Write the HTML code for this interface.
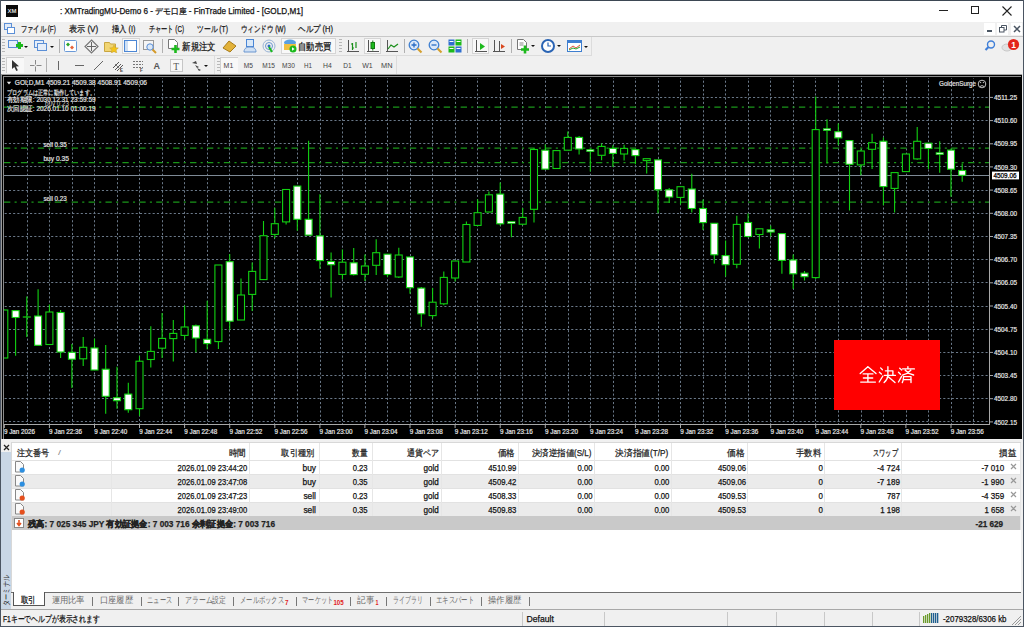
<!DOCTYPE html>
<html><head><meta charset="utf-8">
<style>
*{box-sizing:border-box}
html,body{margin:0;padding:0}
body{width:1024px;height:627px;overflow:hidden;position:relative;background:#f0f0f0;font-family:"Liberation Sans",sans-serif;color:#000}
.a{position:absolute}
.t{position:absolute;white-space:nowrap;line-height:1}
#title{left:0;top:0;width:1024px;height:22px;background:#fff}
#menu{left:0;top:22px;width:1024px;height:14px;background:#f0f0f0}
.mi{position:absolute;top:23px;font-size:11.5px;color:#1a1a1a;white-space:nowrap;line-height:12px}
#tb1{left:1px;top:36px;width:1022px;height:1px;background:#c8c8c8}
.grip{position:absolute;width:3px;background-image:repeating-linear-gradient(#b8b8b8 0 1px,transparent 1px 3px)}
.sep{position:absolute;width:1px;background:#b0b0b0}
.tbtxt{position:absolute;font-size:11.5px;color:#111;white-space:nowrap;line-height:12px}
.tf{position:absolute;top:61px;font-size:7.8px;color:#444;white-space:nowrap;line-height:8px}
.tab{position:absolute;top:597px;font-size:10.5px;color:#666;white-space:nowrap;line-height:11px}
.cell{position:absolute;font-size:9.4px;white-space:nowrap;line-height:10px;text-align:right;color:#111}
</style></head><body>
<div id="title" class="a"></div>
<div class="a" style="left:6px;top:5px;width:12px;height:12px;background:#0a0a0a"></div>
<div class="a" style="left:939px;top:10px;width:9px;height:1px;background:#222"></div>
<div class="a" style="left:971px;top:6px;width:8px;height:8px;border:1px solid #222"></div>
<svg class="a" style="left:1002px;top:6px" width="10" height="10"><path d="M0.5 0.5L9.5 9.5M9.5 0.5L0.5 9.5" stroke="#222" stroke-width="1.1"/></svg>
<div id="menu" class="a"></div>
<svg class="a" style="left:4px;top:23px" width="11" height="11"><rect x="0.5" y="0.5" width="7" height="6" fill="#dfeaf8" stroke="#5b8fd6"/><rect x="3.5" y="4.5" width="7" height="6" fill="#fff" stroke="#5b8fd6"/></svg>
<div class="a" style="left:984px;top:23px;width:11px;height:12px;background:#fff"></div>
<div class="a" style="left:997px;top:23px;width:11px;height:12px;background:#fff"></div>
<div class="a" style="left:1011px;top:23px;width:11px;height:12px;background:#fff"></div>
<div class="a" style="left:987px;top:30px;width:5px;height:2px;background:#4a5562"></div>
<svg class="a" style="left:999px;top:25px" width="8" height="8"><rect x="0.5" y="2.5" width="4.5" height="4.5" fill="none" stroke="#4a5562"/><path d="M2.5 2.5V0.5H7.5V5H5" fill="none" stroke="#4a5562"/></svg>
<svg class="a" style="left:1013px;top:25px" width="8" height="8"><path d="M1 1L7 7M7 1L1 7" stroke="#4a5562" stroke-width="1.5"/></svg>
<div id="tb1" class="a"></div>
<!-- toolbar 1 -->
<div class="a" style="left:1px;top:37px;width:591px;height:18px;background:#f0f0f0;border-right:1px solid #dcdcdc"></div>
<div class="grip" style="left:2px;top:39px;height:14px"></div>
<svg class="a" style="left:7px;top:39px" width="24" height="14"><rect x="1.5" y="1.5" width="9" height="7" fill="#e6eef9" stroke="#5b8fd6"/><path d="M9 6.5h7M12.5 3v7" stroke="#1cb91c" stroke-width="3"/><path d="M17 7h4l-2 2z" fill="#111"/></svg>
<svg class="a" style="left:33px;top:39px" width="24" height="14"><rect x="1.5" y="1.5" width="9" height="7" fill="#e6eef9" stroke="#5b8fd6"/><rect x="4.5" y="4.5" width="9" height="7" fill="#e6eef9" stroke="#5b8fd6"/><path d="M17 7h4l-2 2z" fill="#111"/></svg>
<div class="sep" style="left:59px;top:39px;height:14px"></div>
<svg class="a" style="left:64px;top:40px" width="14" height="13"><rect x="0.5" y="0.5" width="12" height="11" rx="1" fill="#fff" stroke="#6a9ad8"/><path d="M4 2.5l2 2-2 2-2-2z" fill="#2aa52a"/><path d="M8 5.5l2 2-2 2-2-2z" fill="#e8643a"/></svg>
<svg class="a" style="left:84px;top:39px" width="15" height="15"><path d="M7.5 1L14 7.5 7.5 14 1 7.5z" fill="none" stroke="#777" stroke-width="1.2"/><path d="M7.5 3v9M3 7.5h9" stroke="#666"/></svg>
<svg class="a" style="left:104px;top:40px" width="15" height="13"><path d="M0.5 2.5h5l1 1.5h5v7.5h-11z" fill="#f1d573" stroke="#c9a640"/><path d="M10 5l1.3 2.7 3 .3-2.2 2 .6 3-2.7-1.5-2.7 1.5.6-3-2.2-2 3-.3z" fill="#f5c518" stroke="#c9a640" stroke-width=".6"/></svg>
<div class="a" style="left:122px;top:38px;width:18px;height:16px;background:#f8f8f8;border:1px solid #d5d5d5"></div>
<svg class="a" style="left:124px;top:40px" width="14" height="13"><rect x="0.5" y="0.5" width="12" height="11" fill="#fff" stroke="#4b86d4"/><rect x="1" y="1" width="3" height="10" fill="#cfe0f5"/></svg>
<svg class="a" style="left:143px;top:40px" width="15" height="14"><rect x="0.5" y="0.5" width="10" height="9" fill="#f5f5f5" stroke="#999"/><circle cx="7" cy="7" r="3.2" fill="#dbe8f6" stroke="#5b8fd6"/><path d="M9.5 9.5l3.5 3.5" stroke="#d49a2a" stroke-width="2"/></svg>
<div class="sep" style="left:162px;top:39px;height:14px"></div>
<svg class="a" style="left:167px;top:39px" width="14" height="15"><path d="M1.5 0.5h6l3 3v6h-9z" fill="#fff" stroke="#777"/><path d="M4.5 10h8M8.5 6v8" stroke="#1cb91c" stroke-width="2.6"/></svg>
<svg class="a" style="left:222px;top:40px" width="15" height="13"><path d="M1 8l6-7 7 5-6 6z" fill="#e2b23a" stroke="#a87c1a"/></svg>
<svg class="a" style="left:243px;top:39px" width="15" height="14"><rect x="3.5" y="0.5" width="7" height="7" fill="#d9e8f8" stroke="#4a86d6"/><path d="M1 13c0-4 3-5 6-5s6 1 6 5z" fill="#cfe0f4" stroke="#6a96d0"/></svg>
<svg class="a" style="left:262px;top:39px" width="14" height="14"><circle cx="7" cy="7" r="6" fill="none" stroke="#9ab4d6"/><circle cx="7" cy="7" r="3.5" fill="none" stroke="#6a96d0"/><circle cx="7" cy="7" r="1.5" fill="#2f6fc0"/><path d="M7 8l3 5" stroke="#1cb91c" stroke-width="2"/></svg>
<div class="a" style="left:281px;top:38px;width:55px;height:16px;background:#f8f8f8;border:1px solid #d5d5d5"></div>
<svg class="a" style="left:283px;top:39px" width="15" height="14"><ellipse cx="7" cy="3.5" rx="6" ry="3" fill="#5aa0e0"/><path d="M1 5h12v6H1z" fill="#f0c040"/><circle cx="10" cy="10" r="3.5" fill="#1cb91c"/><path d="M9 8.3v3.4l2.6-1.7z" fill="#fff"/></svg>
<div class="grip" style="left:339px;top:39px;height:14px"></div>
<svg class="a" style="left:346px;top:39px" width="14" height="14"><path d="M2.5 1v12M1 12.5h12" stroke="#555"/><path d="M6.5 4v7M5 5h1.5M6.5 9H8M10 3v6" stroke="#1a8f1a" stroke-width="1.2"/></svg>
<div class="a" style="left:364px;top:38px;width:17px;height:16px;background:#f8f8f8;border:1px solid #d5d5d5"></div>
<svg class="a" style="left:366px;top:39px" width="14" height="14"><path d="M2.5 1v12M1 12.5h12" stroke="#555"/><rect x="5" y="3.5" width="3.5" height="6" fill="#1cb91c" stroke="#137a13"/><path d="M6.8 1.5v2M6.8 9.5v2" stroke="#137a13"/></svg>
<svg class="a" style="left:385px;top:39px" width="14" height="14"><path d="M2.5 1v12M1 12.5h12" stroke="#555"/><path d="M3 10l3-4 3 2 4-3" fill="none" stroke="#1a8f1a" stroke-width="1.2"/></svg>
<div class="sep" style="left:404px;top:39px;height:14px"></div>
<svg class="a" style="left:408px;top:39px" width="15" height="15"><circle cx="6" cy="6" r="4.8" fill="#dbe8f8" stroke="#3f7fd0" stroke-width="1.3"/><path d="M3.5 6h5M6 3.5v5" stroke="#2a6cc4" stroke-width="1.3"/><path d="M9.5 9.5l4 4" stroke="#d4a030" stroke-width="2.2"/></svg>
<svg class="a" style="left:428px;top:39px" width="15" height="15"><circle cx="6" cy="6" r="4.8" fill="#dbe8f8" stroke="#3f7fd0" stroke-width="1.3"/><path d="M3.5 6h5" stroke="#2a6cc4" stroke-width="1.3"/><path d="M9.5 9.5l4 4" stroke="#d4a030" stroke-width="2.2"/></svg>
<svg class="a" style="left:448px;top:39px" width="14" height="14"><rect x="0.5" y="0.5" width="6" height="6" fill="#2f6fd0"/><rect x="7.5" y="0.5" width="6" height="6" fill="#1cb91c"/><rect x="0.5" y="7.5" width="6" height="6" fill="#1cb91c"/><rect x="7.5" y="7.5" width="6" height="6" fill="#2f6fd0"/><path d="M1.5 2.5h4M8.5 2.5h4M1.5 9.5h4M8.5 9.5h4" stroke="#fff"/></svg>
<div class="sep" style="left:467px;top:39px;height:14px"></div>
<div class="a" style="left:472px;top:38px;width:17px;height:16px;background:#f8f8f8;border:1px solid #d5d5d5"></div>
<svg class="a" style="left:474px;top:39px" width="14" height="14"><path d="M2.5 1v12M1 12.5h12" stroke="#555"/><path d="M6 4l5 3.5-5 3.5z" fill="#1cb91c"/></svg>
<svg class="a" style="left:492px;top:39px" width="14" height="14"><path d="M2.5 1v12M1 12.5h12M7.5 2v10" stroke="#555"/><path d="M9 5l4 2.5-4 2.5z" fill="#d9481e"/></svg>
<div class="sep" style="left:511px;top:39px;height:14px"></div>
<svg class="a" style="left:516px;top:38px" width="22" height="16"><path d="M1.5 1.5h6l3 3v7h-9z" fill="#fff" stroke="#777"/><path d="M3.5 5h4M3.5 7h4" stroke="#888"/><path d="M5 11.5h8M9 7.5v8" stroke="#1cb91c" stroke-width="2.6"/><path d="M15 7h4l-2 2z" fill="#111"/></svg>
<svg class="a" style="left:541px;top:38px" width="22" height="16"><circle cx="7" cy="8" r="6" fill="#fff" stroke="#2a64b4" stroke-width="2"/><path d="M7 4.5V8h3" stroke="#2a64b4" stroke-width="1.2" fill="none"/><path d="M16 7h4l-2 2z" fill="#111"/></svg>
<svg class="a" style="left:567px;top:39px" width="22" height="15"><rect x="0.5" y="1.5" width="14" height="11" fill="#fff" stroke="#3f7fd0"/><rect x="0.5" y="1.5" width="14" height="2.5" fill="#3f7fd0"/><path d="M2 10l4-3 3 2 4-3" fill="none" stroke="#e0503a"/><path d="M2 11l4-2 3 1 4-2" fill="none" stroke="#2aa52a"/><path d="M17 7h4l-2 2z" fill="#111"/></svg>
<!-- search & notify -->
<svg class="a" style="left:984px;top:39px" width="12" height="13"><circle cx="7" cy="5.5" r="3.5" fill="none" stroke="#3f7fd8" stroke-width="1.4"/><path d="M4.5 8l-3 3" stroke="#3f7fd8" stroke-width="2.2"/></svg>
<svg class="a" style="left:1001px;top:37px" width="20" height="17"><ellipse cx="6" cy="10.5" rx="5" ry="3.5" fill="#e2e2e2" stroke="#c8c8c8"/><circle cx="12.5" cy="7.5" r="5.6" fill="#e3261c"/><text x="12.5" y="10.8" font-size="8.5" font-weight="bold" fill="#fff" text-anchor="middle" font-family="Liberation Sans">1</text></svg>
<!-- toolbar 2 -->
<div class="a" style="left:1px;top:55px;width:591px;height:1px;background:#dcdcdc"></div>
<div class="a" style="left:1px;top:56px;width:214px;height:18px;border-right:1px solid #dcdcdc"></div>
<div class="grip" style="left:2px;top:58px;height:14px"></div>
<div class="a" style="left:6px;top:57px;width:18px;height:16px;background:#f8f8f8;border-top:1px solid #d0d0d0;border-left:1px solid #d0d0d0"></div>
<svg class="a" style="left:11px;top:59px" width="9" height="13"><path d="M1 1v9l2.3-2 2 4 1.6-.8-2-3.8 3.1-.2z" fill="#333"/></svg>
<svg class="a" style="left:29px;top:59px" width="13" height="13"><path d="M6.5 1v4.5M6.5 7.5v5M1 6.5h4.5M7.5 6.5h5" stroke="#888"/></svg>
<div class="sep" style="left:46px;top:58px;height:14px"></div>
<div class="a" style="left:58px;top:61px;width:1px;height:9px;background:#666"></div>
<div class="a" style="left:75px;top:65px;width:9px;height:1px;background:#666"></div>
<svg class="a" style="left:93px;top:60px" width="11" height="11"><path d="M1 10L10 1" stroke="#666"/></svg>
<svg class="a" style="left:112px;top:59px" width="13" height="13"><path d="M1 9l6-6M3 11l6-6M5 12l6-6" stroke="#555"/><path d="M3 5l6 6" stroke="#888"/><text x="8" y="13" font-size="4.5" font-weight="bold" fill="#444" font-family="Liberation Sans">E</text></svg>
<svg class="a" style="left:132px;top:59px" width="13" height="13"><path d="M1 2.5h10M1 5.5h10M1 8.5h10" stroke="#777" stroke-dasharray="2 1"/><text x="8" y="13" font-size="4.5" font-weight="bold" fill="#444" font-family="Liberation Sans">F</text></svg>
<svg class="a" style="left:170px;top:59px" width="13" height="13"><rect x="0.5" y="0.5" width="12" height="12" fill="#f8f8f8" stroke="#999" stroke-dasharray="1 1"/><text x="3.2" y="10.5" font-size="9.5" fill="#555" font-family="Liberation Serif">T</text></svg>
<svg class="a" style="left:190px;top:59px" width="22" height="13"><path d="M2 4l4-2 1 3zM5 6l4 2-2 1z" fill="#444"/><path d="M7 9l4 2-2 1" fill="#444"/><path d="M14 6h4l-2 2z" fill="#111"/></svg>
<div class="grip" style="left:217px;top:58px;height:14px"></div>
<div class="a" style="left:220px;top:57px;width:18px;height:16px;background:#f8f8f8;border-top:1px solid #d0d0d0;border-left:1px solid #d0d0d0"></div>
<div class="a" style="left:396px;top:56px;width:1px;height:18px;background:#dcdcdc"></div>
<svg width="1024" height="627" style="position:absolute;left:0;top:0"><defs><clipPath id="plot"><rect x="4" y="78" width="985" height="346"/></clipPath></defs><rect x="1" y="74" width="1021" height="365" fill="#000"/><line x1="1" y1="74.5" x2="1022" y2="74.5" stroke="#a0a0a0"/><line x1="1.5" y1="74" x2="1.5" y2="439" stroke="#9a9a9a"/><line x1="3.5" y1="77" x2="3.5" y2="439" stroke="#8a8a8a"/><line x1="3" y1="76.5" x2="1021" y2="76.5" stroke="#8a8a8a"/><line x1="1022.5" y1="74" x2="1022.5" y2="439" stroke="#e8e8e8"/><path d="M27.5 78V424 M49.5 78V424 M72.5 78V424 M94.5 78V424 M117.5 78V424 M139.5 78V424 M162.5 78V424 M184.5 78V424 M207.5 78V424 M229.5 78V424 M252.5 78V424 M274.5 78V424 M297.5 78V424 M320.5 78V424 M342.5 78V424 M365.5 78V424 M387.5 78V424 M410.5 78V424 M432.5 78V424 M455.5 78V424 M477.5 78V424 M500.5 78V424 M522.5 78V424 M545.5 78V424 M568.5 78V424 M590.5 78V424 M613.5 78V424 M635.5 78V424 M658.5 78V424 M680.5 78V424 M703.5 78V424 M725.5 78V424 M748.5 78V424 M770.5 78V424 M793.5 78V424 M815.5 78V424 M838.5 78V424 M861.5 78V424 M883.5 78V424 M906.5 78V424 M928.5 78V424 M951.5 78V424 M973.5 78V424" stroke="#6a7888" stroke-width="1" stroke-dasharray="2.114 2.114" stroke-dashoffset="1.55" fill="none"/><path d="M4 97.5H989 M4 120.5H989 M4 143.5H989 M4 166.5H989 M4 190.5H989 M4 213.5H989 M4 236.5H989 M4 259.5H989 M4 282.5H989 M4 306.5H989 M4 329.5H989 M4 352.5H989 M4 375.5H989 M4 398.5H989 M4 421.5H989" stroke="#6a7888" stroke-width="1" stroke-dasharray="2.114 2.114" stroke-dashoffset="3.57" fill="none"/><line x1="4" y1="107.2" x2="989" y2="107.2" stroke="#1a961a" stroke-width="1.2" stroke-dasharray="6.34 4.23 2.11 4.233" stroke-dashoffset="0"/><line x1="4" y1="148.2" x2="989" y2="148.2" stroke="#1a961a" stroke-width="1.2" stroke-dasharray="6.34 4.23 2.11 4.233" stroke-dashoffset="0"/><line x1="4" y1="162.6" x2="989" y2="162.6" stroke="#1a961a" stroke-width="1.2" stroke-dasharray="6.34 4.23 2.11 4.233" stroke-dashoffset="0"/><line x1="4" y1="202.1" x2="989" y2="202.1" stroke="#1a961a" stroke-width="1.2" stroke-dasharray="6.34 4.23 2.11 4.233" stroke-dashoffset="0"/><line x1="4" y1="175.5" x2="989" y2="175.5" stroke="#7e8a96" stroke-width="1"/><g clip-path="url(#plot)"><path d="M4.3 309.5V310.0M4.3 358.0V358.0" stroke="#12d212" stroke-width="1.1"/><rect x="0.8" y="310.0" width="7" height="48.0" fill="#000" stroke="#12d212" stroke-width="1.1"/><path d="M15.6 310.6V310.6M15.6 317.5V355.8" stroke="#12d212" stroke-width="1.1"/><rect x="12.1" y="310.6" width="7" height="6.9" fill="#fff" stroke="#12d212" stroke-width="1.1"/><path d="M26.8 296.6V317.0M26.8 317.0V336.9" stroke="#12d212" stroke-width="1.1"/><path d="M22.8 317.0H30.8" stroke="#0fb80f" stroke-width="1.4"/><path d="M38.1 289.3V316.0M38.1 345.3V345.3" stroke="#12d212" stroke-width="1.1"/><rect x="34.6" y="316.0" width="7" height="29.3" fill="#fff" stroke="#12d212" stroke-width="1.1"/><path d="M49.4 304.6V312.0M49.4 344.5V344.5" stroke="#12d212" stroke-width="1.1"/><rect x="45.9" y="312.0" width="7" height="32.5" fill="#000" stroke="#12d212" stroke-width="1.1"/><path d="M60.6 310.0V312.5M60.6 352.0V358.0" stroke="#12d212" stroke-width="1.1"/><rect x="57.1" y="312.5" width="7" height="39.5" fill="#fff" stroke="#12d212" stroke-width="1.1"/><path d="M71.9 344.0V352.3M71.9 359.2V388.0" stroke="#12d212" stroke-width="1.1"/><rect x="68.4" y="352.3" width="7" height="6.9" fill="#fff" stroke="#12d212" stroke-width="1.1"/><path d="M83.2 337.0V347.3M83.2 358.8V366.0" stroke="#12d212" stroke-width="1.1"/><rect x="79.7" y="347.3" width="7" height="11.5" fill="#000" stroke="#12d212" stroke-width="1.1"/><path d="M94.5 338.5V348.0M94.5 370.0V370.0" stroke="#12d212" stroke-width="1.1"/><rect x="91.0" y="348.0" width="7" height="22.0" fill="#fff" stroke="#12d212" stroke-width="1.1"/><path d="M105.7 345.0V369.2M105.7 396.3V413.7" stroke="#12d212" stroke-width="1.1"/><rect x="102.2" y="369.2" width="7" height="27.1" fill="#fff" stroke="#12d212" stroke-width="1.1"/><path d="M117.0 366.8V397.7M117.0 400.7V408.7" stroke="#12d212" stroke-width="1.1"/><rect x="113.5" y="397.7" width="7" height="3.0" fill="#fff" stroke="#12d212" stroke-width="1.1"/><path d="M128.3 382.8V394.1M128.3 409.7V412.7" stroke="#12d212" stroke-width="1.1"/><rect x="124.8" y="394.1" width="7" height="15.6" fill="#fff" stroke="#12d212" stroke-width="1.1"/><path d="M139.5 355.8V361.2M139.5 408.7V415.7" stroke="#12d212" stroke-width="1.1"/><rect x="136.0" y="361.2" width="7" height="47.5" fill="#000" stroke="#12d212" stroke-width="1.1"/><path d="M150.8 326.3V351.4M150.8 359.5V367.5" stroke="#12d212" stroke-width="1.1"/><rect x="147.3" y="351.4" width="7" height="8.1" fill="#000" stroke="#12d212" stroke-width="1.1"/><path d="M162.1 313.0V338.4M162.1 348.2V357.9" stroke="#12d212" stroke-width="1.1"/><rect x="158.6" y="338.4" width="7" height="9.8" fill="#000" stroke="#12d212" stroke-width="1.1"/><path d="M173.3 320.0V333.4M173.3 338.6V361.5" stroke="#12d212" stroke-width="1.1"/><rect x="169.8" y="333.4" width="7" height="5.2" fill="#000" stroke="#12d212" stroke-width="1.1"/><path d="M184.6 305.4V327.0M184.6 335.4V339.4" stroke="#12d212" stroke-width="1.1"/><rect x="181.1" y="327.0" width="7" height="8.4" fill="#000" stroke="#12d212" stroke-width="1.1"/><path d="M195.9 324.5V325.8M195.9 338.0V352.3" stroke="#12d212" stroke-width="1.1"/><rect x="192.4" y="325.8" width="7" height="12.2" fill="#fff" stroke="#12d212" stroke-width="1.1"/><path d="M207.2 300.8V339.3M207.2 343.6V349.3" stroke="#12d212" stroke-width="1.1"/><rect x="203.7" y="339.3" width="7" height="4.3" fill="#fff" stroke="#12d212" stroke-width="1.1"/><path d="M218.4 265.0V265.0M218.4 341.6V349.0" stroke="#12d212" stroke-width="1.1"/><rect x="214.9" y="265.0" width="7" height="76.6" fill="#000" stroke="#12d212" stroke-width="1.1"/><path d="M229.7 254.0V261.7M229.7 321.2V330.0" stroke="#12d212" stroke-width="1.1"/><rect x="226.2" y="261.7" width="7" height="59.5" fill="#fff" stroke="#12d212" stroke-width="1.1"/><path d="M241.0 278.6V295.0M241.0 320.0V320.0" stroke="#12d212" stroke-width="1.1"/><rect x="237.5" y="295.0" width="7" height="25.0" fill="#000" stroke="#12d212" stroke-width="1.1"/><path d="M252.2 262.5V271.4M252.2 294.4V311.0" stroke="#12d212" stroke-width="1.1"/><rect x="248.7" y="271.4" width="7" height="23.0" fill="#000" stroke="#12d212" stroke-width="1.1"/><path d="M263.5 221.0V235.7M263.5 279.6V279.6" stroke="#12d212" stroke-width="1.1"/><rect x="260.0" y="235.7" width="7" height="43.9" fill="#000" stroke="#12d212" stroke-width="1.1"/><path d="M274.8 207.7V223.7M274.8 234.4V238.3" stroke="#12d212" stroke-width="1.1"/><rect x="271.3" y="223.7" width="7" height="10.7" fill="#000" stroke="#12d212" stroke-width="1.1"/><path d="M286.1 189.5V189.5M286.1 221.9V224.4" stroke="#12d212" stroke-width="1.1"/><rect x="282.6" y="189.5" width="7" height="32.4" fill="#000" stroke="#12d212" stroke-width="1.1"/><path d="M297.3 186.1V186.1M297.3 219.3V230.8" stroke="#12d212" stroke-width="1.1"/><rect x="293.8" y="186.1" width="7" height="33.2" fill="#fff" stroke="#12d212" stroke-width="1.1"/><path d="M308.6 140.7V219.3M308.6 235.1V235.1" stroke="#12d212" stroke-width="1.1"/><rect x="305.1" y="219.3" width="7" height="15.8" fill="#fff" stroke="#12d212" stroke-width="1.1"/><path d="M319.9 194.3V235.9M319.9 260.6V268.7" stroke="#12d212" stroke-width="1.1"/><rect x="316.4" y="235.9" width="7" height="24.7" fill="#fff" stroke="#12d212" stroke-width="1.1"/><path d="M331.1 252.4V261.5M331.1 264.7V297.4" stroke="#12d212" stroke-width="1.1"/><rect x="327.6" y="261.5" width="7" height="3.2" fill="#fff" stroke="#12d212" stroke-width="1.1"/><path d="M342.4 249.6V262.2M342.4 274.4V279.2" stroke="#12d212" stroke-width="1.1"/><rect x="338.9" y="262.2" width="7" height="12.2" fill="#000" stroke="#12d212" stroke-width="1.1"/><path d="M353.7 248.1V262.8M353.7 274.6V275.4" stroke="#12d212" stroke-width="1.1"/><rect x="350.2" y="262.8" width="7" height="11.8" fill="#fff" stroke="#12d212" stroke-width="1.1"/><path d="M364.9 254.4V266.0M364.9 274.3V281.1" stroke="#12d212" stroke-width="1.1"/><rect x="361.4" y="266.0" width="7" height="8.3" fill="#000" stroke="#12d212" stroke-width="1.1"/><path d="M376.2 239.2V252.7M376.2 265.3V275.0" stroke="#12d212" stroke-width="1.1"/><rect x="372.7" y="252.7" width="7" height="12.6" fill="#000" stroke="#12d212" stroke-width="1.1"/><path d="M387.5 254.0V254.2M387.5 274.5V277.0" stroke="#12d212" stroke-width="1.1"/><rect x="384.0" y="254.2" width="7" height="20.3" fill="#fff" stroke="#12d212" stroke-width="1.1"/><path d="M398.8 247.7V255.0M398.8 277.0V278.0" stroke="#12d212" stroke-width="1.1"/><rect x="395.2" y="255.0" width="7" height="22.0" fill="#000" stroke="#12d212" stroke-width="1.1"/><path d="M410.0 257.0V257.0M410.0 287.7V293.7" stroke="#12d212" stroke-width="1.1"/><rect x="406.5" y="257.0" width="7" height="30.7" fill="#fff" stroke="#12d212" stroke-width="1.1"/><path d="M421.3 287.0V288.1M421.3 313.8V326.8" stroke="#12d212" stroke-width="1.1"/><rect x="417.8" y="288.1" width="7" height="25.7" fill="#fff" stroke="#12d212" stroke-width="1.1"/><path d="M432.6 288.0V302.2M432.6 315.6V318.3" stroke="#12d212" stroke-width="1.1"/><rect x="429.1" y="302.2" width="7" height="13.4" fill="#000" stroke="#12d212" stroke-width="1.1"/><path d="M443.8 271.4V277.4M443.8 303.8V305.3" stroke="#12d212" stroke-width="1.1"/><rect x="440.3" y="277.4" width="7" height="26.4" fill="#000" stroke="#12d212" stroke-width="1.1"/><path d="M455.1 261.0V261.0M455.1 278.0V281.5" stroke="#12d212" stroke-width="1.1"/><rect x="451.6" y="261.0" width="7" height="17.0" fill="#000" stroke="#12d212" stroke-width="1.1"/><path d="M466.4 221.4V224.5M466.4 262.0V262.0" stroke="#12d212" stroke-width="1.1"/><rect x="462.9" y="224.5" width="7" height="37.5" fill="#000" stroke="#12d212" stroke-width="1.1"/><path d="M477.6 199.3V212.7M477.6 225.4V226.3" stroke="#12d212" stroke-width="1.1"/><rect x="474.1" y="212.7" width="7" height="12.7" fill="#000" stroke="#12d212" stroke-width="1.1"/><path d="M488.9 191.5V194.8M488.9 212.0V212.3" stroke="#12d212" stroke-width="1.1"/><rect x="485.4" y="194.8" width="7" height="17.2" fill="#000" stroke="#12d212" stroke-width="1.1"/><path d="M500.2 182.5V194.1M500.2 223.8V225.6" stroke="#12d212" stroke-width="1.1"/><rect x="496.7" y="194.1" width="7" height="29.7" fill="#fff" stroke="#12d212" stroke-width="1.1"/><path d="M511.4 222.0V222.5M511.4 223.8V237.3" stroke="#12d212" stroke-width="1.1"/><rect x="507.8" y="221.6" width="7.2" height="1.8" fill="#cfffcf" stroke="#12d212" stroke-width="0.8"/><path d="M522.7 208.0V217.4M522.7 224.2V225.3" stroke="#12d212" stroke-width="1.1"/><rect x="519.2" y="217.4" width="7" height="6.8" fill="#000" stroke="#12d212" stroke-width="1.1"/><path d="M534.0 148.0V149.5M534.0 209.3V222.5" stroke="#12d212" stroke-width="1.1"/><rect x="530.5" y="149.5" width="7" height="59.8" fill="#000" stroke="#12d212" stroke-width="1.1"/><path d="M545.3 144.6V150.2M545.3 169.1V169.1" stroke="#12d212" stroke-width="1.1"/><rect x="541.8" y="150.2" width="7" height="18.9" fill="#fff" stroke="#12d212" stroke-width="1.1"/><path d="M556.5 150.6V150.6M556.5 168.5V168.5" stroke="#12d212" stroke-width="1.1"/><rect x="553.0" y="150.6" width="7" height="17.9" fill="#000" stroke="#12d212" stroke-width="1.1"/><path d="M567.8 131.6V137.4M567.8 150.2V150.2" stroke="#12d212" stroke-width="1.1"/><rect x="564.3" y="137.4" width="7" height="12.8" fill="#000" stroke="#12d212" stroke-width="1.1"/><path d="M579.1 136.0V137.4M579.1 149.0V154.6" stroke="#12d212" stroke-width="1.1"/><rect x="575.6" y="137.4" width="7" height="11.6" fill="#fff" stroke="#12d212" stroke-width="1.1"/><path d="M590.3 149.0V150.6M590.3 150.6V171.4" stroke="#12d212" stroke-width="1.1"/><rect x="586.7" y="149.7" width="7.2" height="1.8" fill="#cfffcf" stroke="#12d212" stroke-width="0.8"/><path d="M601.6 143.5V146.4M601.6 155.3V160.2" stroke="#12d212" stroke-width="1.1"/><rect x="598.1" y="146.4" width="7" height="8.9" fill="#000" stroke="#12d212" stroke-width="1.1"/><path d="M612.9 145.2V148.4M612.9 153.4V167.0" stroke="#12d212" stroke-width="1.1"/><rect x="609.4" y="148.4" width="7" height="5.0" fill="#fff" stroke="#12d212" stroke-width="1.1"/><path d="M624.1 144.8V148.4M624.1 154.0V160.6" stroke="#12d212" stroke-width="1.1"/><rect x="620.6" y="148.4" width="7" height="5.6" fill="#000" stroke="#12d212" stroke-width="1.1"/><path d="M635.4 149.0V149.6M635.4 155.6V164.2" stroke="#12d212" stroke-width="1.1"/><rect x="631.9" y="149.6" width="7" height="6.0" fill="#fff" stroke="#12d212" stroke-width="1.1"/><path d="M646.7 158.7V158.7M646.7 160.6V173.5" stroke="#12d212" stroke-width="1.1"/><rect x="643.2" y="158.7" width="7" height="1.9" fill="#000" stroke="#12d212" stroke-width="1.1"/><path d="M658.0 159.9V159.9M658.0 189.8V213.2" stroke="#12d212" stroke-width="1.1"/><rect x="654.5" y="159.9" width="7" height="29.9" fill="#fff" stroke="#12d212" stroke-width="1.1"/><path d="M669.2 188.0V189.8M669.2 197.0V203.0" stroke="#12d212" stroke-width="1.1"/><rect x="665.7" y="189.8" width="7" height="7.2" fill="#fff" stroke="#12d212" stroke-width="1.1"/><path d="M680.5 186.7V186.7M680.5 197.4V204.6" stroke="#12d212" stroke-width="1.1"/><rect x="677.0" y="186.7" width="7" height="10.7" fill="#000" stroke="#12d212" stroke-width="1.1"/><path d="M691.8 173.8V189.0M691.8 208.5V212.5" stroke="#12d212" stroke-width="1.1"/><rect x="688.3" y="189.0" width="7" height="19.5" fill="#fff" stroke="#12d212" stroke-width="1.1"/><path d="M703.0 199.4V208.5M703.0 222.6V230.0" stroke="#12d212" stroke-width="1.1"/><rect x="699.5" y="208.5" width="7" height="14.1" fill="#fff" stroke="#12d212" stroke-width="1.1"/><path d="M714.3 223.3V223.3M714.3 254.8V263.5" stroke="#12d212" stroke-width="1.1"/><rect x="710.8" y="223.3" width="7" height="31.5" fill="#fff" stroke="#12d212" stroke-width="1.1"/><path d="M725.6 240.5V255.6M725.6 264.7V276.4" stroke="#12d212" stroke-width="1.1"/><rect x="722.1" y="255.6" width="7" height="9.1" fill="#fff" stroke="#12d212" stroke-width="1.1"/><path d="M736.8 215.8V224.4M736.8 264.3V268.3" stroke="#12d212" stroke-width="1.1"/><rect x="733.3" y="224.4" width="7" height="39.9" fill="#000" stroke="#12d212" stroke-width="1.1"/><path d="M748.1 213.5V222.5M748.1 236.5V237.4" stroke="#12d212" stroke-width="1.1"/><rect x="744.6" y="222.5" width="7" height="14.0" fill="#fff" stroke="#12d212" stroke-width="1.1"/><path d="M759.4 228.8V228.8M759.4 234.5V248.5" stroke="#12d212" stroke-width="1.1"/><rect x="755.9" y="228.8" width="7" height="5.7" fill="#000" stroke="#12d212" stroke-width="1.1"/><path d="M770.7 225.4V229.8M770.7 232.0V236.5" stroke="#12d212" stroke-width="1.1"/><rect x="767.2" y="229.8" width="7" height="2.2" fill="#fff" stroke="#12d212" stroke-width="1.1"/><path d="M781.9 233.2V233.6M781.9 260.4V273.8" stroke="#12d212" stroke-width="1.1"/><rect x="778.4" y="233.6" width="7" height="26.8" fill="#fff" stroke="#12d212" stroke-width="1.1"/><path d="M793.2 254.6V260.0M793.2 273.8V289.1" stroke="#12d212" stroke-width="1.1"/><rect x="789.7" y="260.0" width="7" height="13.8" fill="#fff" stroke="#12d212" stroke-width="1.1"/><path d="M804.5 270.9V273.2M804.5 276.7V280.5" stroke="#12d212" stroke-width="1.1"/><rect x="801.0" y="273.2" width="7" height="3.5" fill="#fff" stroke="#12d212" stroke-width="1.1"/><path d="M815.7 96.4V129.6M815.7 277.6V279.0" stroke="#12d212" stroke-width="1.1"/><rect x="812.2" y="129.6" width="7" height="148.0" fill="#000" stroke="#12d212" stroke-width="1.1"/><path d="M827.0 119.2V129.6M827.0 131.0V163.4" stroke="#12d212" stroke-width="1.1"/><rect x="823.4" y="128.7" width="7.2" height="1.8" fill="#cfffcf" stroke="#12d212" stroke-width="0.8"/><path d="M838.3 123.4V131.7M838.3 137.9V145.2" stroke="#12d212" stroke-width="1.1"/><rect x="834.8" y="131.7" width="7" height="6.2" fill="#fff" stroke="#12d212" stroke-width="1.1"/><path d="M849.5 140.6V140.6M849.5 164.3V210.5" stroke="#12d212" stroke-width="1.1"/><rect x="846.0" y="140.6" width="7" height="23.7" fill="#fff" stroke="#12d212" stroke-width="1.1"/><path d="M860.8 149.3V151.0M860.8 164.9V175.2" stroke="#12d212" stroke-width="1.1"/><rect x="857.3" y="151.0" width="7" height="13.9" fill="#000" stroke="#12d212" stroke-width="1.1"/><path d="M872.1 133.8V142.7M872.1 149.3V169.0" stroke="#12d212" stroke-width="1.1"/><rect x="868.6" y="142.7" width="7" height="6.6" fill="#000" stroke="#12d212" stroke-width="1.1"/><path d="M883.4 137.5V141.2M883.4 186.6V205.2" stroke="#12d212" stroke-width="1.1"/><rect x="879.9" y="141.2" width="7" height="45.4" fill="#fff" stroke="#12d212" stroke-width="1.1"/><path d="M894.6 172.6V172.6M894.6 188.4V212.5" stroke="#12d212" stroke-width="1.1"/><rect x="891.1" y="172.6" width="7" height="15.8" fill="#000" stroke="#12d212" stroke-width="1.1"/><path d="M905.9 154.0V154.0M905.9 171.6V172.0" stroke="#12d212" stroke-width="1.1"/><rect x="902.4" y="154.0" width="7" height="17.6" fill="#000" stroke="#12d212" stroke-width="1.1"/><path d="M917.2 127.0V141.3M917.2 158.9V159.7" stroke="#12d212" stroke-width="1.1"/><rect x="913.7" y="141.3" width="7" height="17.6" fill="#000" stroke="#12d212" stroke-width="1.1"/><path d="M928.4 143.2V143.2M928.4 148.5V168.9" stroke="#12d212" stroke-width="1.1"/><rect x="924.9" y="143.2" width="7" height="5.3" fill="#fff" stroke="#12d212" stroke-width="1.1"/><path d="M939.7 141.3V153.6M939.7 153.6V172.7" stroke="#12d212" stroke-width="1.1"/><rect x="936.1" y="152.7" width="7.2" height="1.8" fill="#cfffcf" stroke="#12d212" stroke-width="0.8"/><path d="M951.0 148.5V150.1M951.0 169.2V196.7" stroke="#12d212" stroke-width="1.1"/><rect x="947.5" y="150.1" width="7" height="19.1" fill="#fff" stroke="#12d212" stroke-width="1.1"/><path d="M962.2 163.6V170.5M962.2 175.3V181.7" stroke="#12d212" stroke-width="1.1"/><rect x="958.7" y="170.5" width="7" height="4.8" fill="#fff" stroke="#12d212" stroke-width="1.1"/></g><line x1="989.5" y1="77" x2="989.5" y2="425" stroke="#a8a8a8"/><line x1="4" y1="424.5" x2="990" y2="424.5" stroke="#a8a8a8"/><path d="M989 97.4H993 M989 120.6H993 M989 143.8H993 M989 166.9H993 M989 190.1H993 M989 213.3H993 M989 236.5H993 M989 259.7H993 M989 282.8H993 M989 306.0H993 M989 329.2H993 M989 352.4H993 M989 375.5H993 M989 398.7H993 M989 421.9H993 M4.3 424V428 M49.4 424V428 M94.5 424V428 M139.5 424V428 M184.6 424V428 M229.7 424V428 M274.8 424V428 M319.9 424V428 M364.9 424V428 M410.0 424V428 M455.1 424V428 M500.2 424V428 M545.3 424V428 M590.3 424V428 M635.4 424V428 M680.5 424V428 M725.6 424V428 M770.7 424V428 M815.7 424V428 M860.8 424V428 M905.9 424V428 M951.0 424V428" stroke="#a8a8a8"/><rect x="992" y="171.6" width="27" height="7.8" fill="#fff"/><path d="M6.8 81.8h4.4l-2.2 2.6z" fill="#e6e6e6"/><g stroke="#d8d8d8" fill="none" stroke-width="0.9"><circle cx="982" cy="84" r="3.8"/><path d="M980 82.6h1.2M982.8 82.6h1.2M979.8 86.6Q982 84.6 984.2 86.6"/></g><rect x="834" y="340" width="106" height="70" fill="#ff0000"/><g role="img" aria-label="全決済" stroke="#fff" stroke-width="1.35" fill="none" stroke-linecap="round" stroke-linejoin="round"><path d="M867.9 366.7L860.2 373.6M867.9 366.7L876 373.6M863.2 373.9H872.9M863.4 378H872.7M860.7 382.1H875.4M867.9 373.9V382.1"/><path d="M880.6 367.9L882.4 369.8M879.4 372.3L881.4 374.1M879.2 382L882.9 376"/><path d="M885.4 370.8H892.9V375.4M884.4 375.4H895.4M887.9 366.7V375.4Q887.6 379.5 884.1 382.6M888.6 377L895 382.6"/><path d="M899.7 368.2L901.7 370M898.5 372.3L900.5 374.3M898.5 382L901.6 376.4"/><path d="M907.9 366.6V368.3M902.6 368.9H914.4M905.2 370.2Q908.5 373.8 913.6 375M910.8 370.2Q907.5 373.8 902.4 375.2M903.6 376.4Q903.5 380 902.3 382.6M903.8 376.6H911V382.6M903.8 379.6H911"/></g></svg>
<div class="a" style="left:1px;top:452px;width:10px;height:157px;background:#c9d7e6"></div><svg class="a" style="left:3px;top:444px" width="7" height="7"><path d="M1 1L6 6M6 1L1 6" stroke="#222" stroke-width="1.3"/></svg><div class="a" style="left:11px;top:442px;width:1010px;height:150px;background:#fff;border-top:1px solid #d8d8d8;border-left:1px solid #d8d8d8"></div><div class="a" style="left:12px;top:460px;width:1008px;height:14px;background:#fff;border-top:1px solid #e2e2e2"></div><div class="a" style="left:12px;top:474px;width:1008px;height:14px;background:#ebebeb;border-top:1px solid #e2e2e2"></div><div class="a" style="left:12px;top:488px;width:1008px;height:14px;background:#fff;border-top:1px solid #e2e2e2"></div><div class="a" style="left:12px;top:502px;width:1008px;height:14px;background:#ebebeb;border-top:1px solid #e2e2e2"></div><div class="a" style="left:12px;top:516px;width:1008px;height:14px;background:#c9c9c9"></div><div class="a" style="left:111px;top:443px;width:1px;height:73px;background:#e6e6e6"></div><div class="a" style="left:249px;top:443px;width:1px;height:73px;background:#e6e6e6"></div><div class="a" style="left:319px;top:443px;width:1px;height:73px;background:#e6e6e6"></div><div class="a" style="left:372px;top:443px;width:1px;height:73px;background:#e6e6e6"></div><div class="a" style="left:441px;top:443px;width:1px;height:73px;background:#e6e6e6"></div><div class="a" style="left:518px;top:443px;width:1px;height:73px;background:#e6e6e6"></div><div class="a" style="left:594px;top:443px;width:1px;height:73px;background:#e6e6e6"></div><div class="a" style="left:671px;top:443px;width:1px;height:73px;background:#e6e6e6"></div><div class="a" style="left:747px;top:443px;width:1px;height:73px;background:#e6e6e6"></div><div class="a" style="left:824px;top:443px;width:1px;height:73px;background:#e6e6e6"></div><div class="a" style="left:901px;top:443px;width:1px;height:73px;background:#e6e6e6"></div><div class="a" style="left:1020px;top:443px;width:1px;height:87px;background:#e6e6e6"></div><svg class="a" style="left:14px;top:460.5px" width="12" height="12"><path d="M1.5 0.5h5l3 3v7.5h-8z" fill="#fafafa" stroke="#888"/><circle cx="8.2" cy="9" r="2.6" fill="#2d8fe0"/></svg><svg class="a" style="left:1010px;top:463.0px" width="7" height="7"><path d="M1 1L6 6M6 1L1 6" stroke="#999" stroke-width="1.2"/></svg><svg class="a" style="left:14px;top:474.5px" width="12" height="12"><path d="M1.5 0.5h5l3 3v7.5h-8z" fill="#fafafa" stroke="#888"/><circle cx="8.2" cy="9" r="2.6" fill="#2d8fe0"/></svg><svg class="a" style="left:1010px;top:477.0px" width="7" height="7"><path d="M1 1L6 6M6 1L1 6" stroke="#999" stroke-width="1.2"/></svg><svg class="a" style="left:14px;top:488.5px" width="12" height="12"><path d="M1.5 0.5h5l3 3v7.5h-8z" fill="#fafafa" stroke="#888"/><circle cx="8.2" cy="9" r="2.6" fill="#e5501e"/></svg><svg class="a" style="left:1010px;top:491.0px" width="7" height="7"><path d="M1 1L6 6M6 1L1 6" stroke="#999" stroke-width="1.2"/></svg><svg class="a" style="left:14px;top:502.5px" width="12" height="12"><path d="M1.5 0.5h5l3 3v7.5h-8z" fill="#fafafa" stroke="#888"/><circle cx="8.2" cy="9" r="2.6" fill="#e5501e"/></svg><svg class="a" style="left:1010px;top:505.0px" width="7" height="7"><path d="M1 1L6 6M6 1L1 6" stroke="#999" stroke-width="1.2"/></svg><svg class="a" style="left:14px;top:518px" width="11" height="11"><rect x="0.5" y="0.5" width="9" height="9" fill="#fff" stroke="#888"/><path d="M5 2v5M3 5l2 2.5 2-2.5" stroke="#e5501e" stroke-width="1.6" fill="none"/></svg><div class="a" style="left:11px;top:592px;width:1010px;height:1px;background:#6e6e6e"></div><div class="a" style="left:1px;top:609px;width:1022px;height:1px;background:#a8a8a8"></div><div class="a" style="left:13px;top:592px;width:32px;height:14px;background:#fff;border:1px solid #555;border-top:none"></div><div class="a" style="left:92px;top:597px;width:1px;height:9px;background:#777"></div><div class="a" style="left:141px;top:597px;width:1px;height:9px;background:#777"></div><div class="a" style="left:178px;top:597px;width:1px;height:9px;background:#777"></div><div class="a" style="left:233px;top:597px;width:1px;height:9px;background:#777"></div><div class="a" style="left:296px;top:597px;width:1px;height:9px;background:#777"></div><div class="a" style="left:350px;top:597px;width:1px;height:9px;background:#777"></div><div class="a" style="left:386px;top:597px;width:1px;height:9px;background:#777"></div><div class="a" style="left:430px;top:597px;width:1px;height:9px;background:#777"></div><div class="a" style="left:481px;top:597px;width:1px;height:9px;background:#777"></div><div class="a" style="left:529px;top:597px;width:1px;height:9px;background:#777"></div><div class="a" style="left:522px;top:612px;width:1px;height:14px;background:#c8c8c8"></div><div class="a" style="left:604px;top:612px;width:1px;height:14px;background:#c8c8c8"></div><div class="a" style="left:727px;top:612px;width:1px;height:14px;background:#c8c8c8"></div><div class="a" style="left:776px;top:612px;width:1px;height:14px;background:#c8c8c8"></div><div class="a" style="left:824px;top:612px;width:1px;height:14px;background:#c8c8c8"></div><div class="a" style="left:872px;top:612px;width:1px;height:14px;background:#c8c8c8"></div><div class="a" style="left:919px;top:612px;width:1px;height:14px;background:#c8c8c8"></div><svg class="a" style="left:922px;top:613px" width="18" height="11"><rect x="1" y="3" width="1.3" height="7" fill="#6a9a2a"/><rect x="3" y="2" width="1.3" height="8" fill="#6a9a2a"/><rect x="5" y="1" width="1.3" height="9" fill="#6a9a2a"/><rect x="7" y="0" width="1.3" height="10" fill="#6a9a2a"/><rect x="9" y="0" width="1.3" height="10" fill="#1f5f8f"/><rect x="11" y="0" width="1.3" height="10" fill="#1f5f8f"/><rect x="13" y="0" width="1.3" height="10" fill="#1f5f8f"/><rect x="15" y="0" width="1.3" height="10" fill="#1f5f8f"/></svg><svg class="a" style="left:1010px;top:614px" width="12" height="12"><path d="M11 2L2 11M11 5L5 11M11 8L8 11" stroke="#999"/></svg><svg class="a" style="left:0;top:570px" width="12" height="40"><text transform="translate(9 36) rotate(-90)" font-family="Liberation Sans" font-size="8" fill="#333" textLength="31" lengthAdjust="spacingAndGlyphs">ターミナル</text></svg>
<svg width="1024" height="627" style="position:absolute;left:0;top:0" font-family="Liberation Sans" xml:space="preserve"><text x="994.0" y="100.0" font-size="7.2" fill="#e8e8e8" stroke="#e8e8e8" stroke-width="0.2" textLength="23.0" lengthAdjust="spacingAndGlyphs">4511.25</text><text x="994.0" y="123.2" font-size="7.2" fill="#e8e8e8" stroke="#e8e8e8" stroke-width="0.2" textLength="23.0" lengthAdjust="spacingAndGlyphs">4510.60</text><text x="994.0" y="146.4" font-size="7.2" fill="#e8e8e8" stroke="#e8e8e8" stroke-width="0.2" textLength="23.0" lengthAdjust="spacingAndGlyphs">4509.95</text><text x="994.0" y="169.5" font-size="7.2" fill="#e8e8e8" stroke="#e8e8e8" stroke-width="0.2" textLength="23.0" lengthAdjust="spacingAndGlyphs">4509.30</text><text x="994.0" y="192.7" font-size="7.2" fill="#e8e8e8" stroke="#e8e8e8" stroke-width="0.2" textLength="23.0" lengthAdjust="spacingAndGlyphs">4508.65</text><text x="994.0" y="215.9" font-size="7.2" fill="#e8e8e8" stroke="#e8e8e8" stroke-width="0.2" textLength="23.0" lengthAdjust="spacingAndGlyphs">4508.00</text><text x="994.0" y="239.1" font-size="7.2" fill="#e8e8e8" stroke="#e8e8e8" stroke-width="0.2" textLength="23.0" lengthAdjust="spacingAndGlyphs">4507.35</text><text x="994.0" y="262.3" font-size="7.2" fill="#e8e8e8" stroke="#e8e8e8" stroke-width="0.2" textLength="23.0" lengthAdjust="spacingAndGlyphs">4506.70</text><text x="994.0" y="285.4" font-size="7.2" fill="#e8e8e8" stroke="#e8e8e8" stroke-width="0.2" textLength="23.0" lengthAdjust="spacingAndGlyphs">4506.05</text><text x="994.0" y="308.6" font-size="7.2" fill="#e8e8e8" stroke="#e8e8e8" stroke-width="0.2" textLength="23.0" lengthAdjust="spacingAndGlyphs">4505.40</text><text x="994.0" y="331.8" font-size="7.2" fill="#e8e8e8" stroke="#e8e8e8" stroke-width="0.2" textLength="23.0" lengthAdjust="spacingAndGlyphs">4504.75</text><text x="994.0" y="355.0" font-size="7.2" fill="#e8e8e8" stroke="#e8e8e8" stroke-width="0.2" textLength="23.0" lengthAdjust="spacingAndGlyphs">4504.10</text><text x="994.0" y="378.1" font-size="7.2" fill="#e8e8e8" stroke="#e8e8e8" stroke-width="0.2" textLength="23.0" lengthAdjust="spacingAndGlyphs">4503.45</text><text x="994.0" y="401.3" font-size="7.2" fill="#e8e8e8" stroke="#e8e8e8" stroke-width="0.2" textLength="23.0" lengthAdjust="spacingAndGlyphs">4502.80</text><text x="994.0" y="424.5" font-size="7.2" fill="#e8e8e8" stroke="#e8e8e8" stroke-width="0.2" textLength="23.0" lengthAdjust="spacingAndGlyphs">4502.15</text><text x="4.0" y="434.0" font-size="7.2" fill="#e8e8e8" stroke="#e8e8e8" stroke-width="0.2" textLength="31.0" lengthAdjust="spacingAndGlyphs">9 Jan 2026</text><text x="49.1" y="434.0" font-size="7.2" fill="#e8e8e8" stroke="#e8e8e8" stroke-width="0.2" textLength="33.0" lengthAdjust="spacingAndGlyphs">9 Jan 22:36</text><text x="94.2" y="434.0" font-size="7.2" fill="#e8e8e8" stroke="#e8e8e8" stroke-width="0.2" textLength="33.0" lengthAdjust="spacingAndGlyphs">9 Jan 22:40</text><text x="139.2" y="434.0" font-size="7.2" fill="#e8e8e8" stroke="#e8e8e8" stroke-width="0.2" textLength="33.0" lengthAdjust="spacingAndGlyphs">9 Jan 22:44</text><text x="184.3" y="434.0" font-size="7.2" fill="#e8e8e8" stroke="#e8e8e8" stroke-width="0.2" textLength="33.0" lengthAdjust="spacingAndGlyphs">9 Jan 22:48</text><text x="229.4" y="434.0" font-size="7.2" fill="#e8e8e8" stroke="#e8e8e8" stroke-width="0.2" textLength="33.0" lengthAdjust="spacingAndGlyphs">9 Jan 22:52</text><text x="274.5" y="434.0" font-size="7.2" fill="#e8e8e8" stroke="#e8e8e8" stroke-width="0.2" textLength="33.0" lengthAdjust="spacingAndGlyphs">9 Jan 22:56</text><text x="319.6" y="434.0" font-size="7.2" fill="#e8e8e8" stroke="#e8e8e8" stroke-width="0.2" textLength="33.0" lengthAdjust="spacingAndGlyphs">9 Jan 23:00</text><text x="364.6" y="434.0" font-size="7.2" fill="#e8e8e8" stroke="#e8e8e8" stroke-width="0.2" textLength="33.0" lengthAdjust="spacingAndGlyphs">9 Jan 23:04</text><text x="409.7" y="434.0" font-size="7.2" fill="#e8e8e8" stroke="#e8e8e8" stroke-width="0.2" textLength="33.0" lengthAdjust="spacingAndGlyphs">9 Jan 23:08</text><text x="454.8" y="434.0" font-size="7.2" fill="#e8e8e8" stroke="#e8e8e8" stroke-width="0.2" textLength="33.0" lengthAdjust="spacingAndGlyphs">9 Jan 23:12</text><text x="499.9" y="434.0" font-size="7.2" fill="#e8e8e8" stroke="#e8e8e8" stroke-width="0.2" textLength="33.0" lengthAdjust="spacingAndGlyphs">9 Jan 23:16</text><text x="545.0" y="434.0" font-size="7.2" fill="#e8e8e8" stroke="#e8e8e8" stroke-width="0.2" textLength="33.0" lengthAdjust="spacingAndGlyphs">9 Jan 23:20</text><text x="590.0" y="434.0" font-size="7.2" fill="#e8e8e8" stroke="#e8e8e8" stroke-width="0.2" textLength="33.0" lengthAdjust="spacingAndGlyphs">9 Jan 23:24</text><text x="635.1" y="434.0" font-size="7.2" fill="#e8e8e8" stroke="#e8e8e8" stroke-width="0.2" textLength="33.0" lengthAdjust="spacingAndGlyphs">9 Jan 23:28</text><text x="680.2" y="434.0" font-size="7.2" fill="#e8e8e8" stroke="#e8e8e8" stroke-width="0.2" textLength="33.0" lengthAdjust="spacingAndGlyphs">9 Jan 23:32</text><text x="725.3" y="434.0" font-size="7.2" fill="#e8e8e8" stroke="#e8e8e8" stroke-width="0.2" textLength="33.0" lengthAdjust="spacingAndGlyphs">9 Jan 23:36</text><text x="770.4" y="434.0" font-size="7.2" fill="#e8e8e8" stroke="#e8e8e8" stroke-width="0.2" textLength="33.0" lengthAdjust="spacingAndGlyphs">9 Jan 23:40</text><text x="815.4" y="434.0" font-size="7.2" fill="#e8e8e8" stroke="#e8e8e8" stroke-width="0.2" textLength="33.0" lengthAdjust="spacingAndGlyphs">9 Jan 23:44</text><text x="860.5" y="434.0" font-size="7.2" fill="#e8e8e8" stroke="#e8e8e8" stroke-width="0.2" textLength="33.0" lengthAdjust="spacingAndGlyphs">9 Jan 23:48</text><text x="905.6" y="434.0" font-size="7.2" fill="#e8e8e8" stroke="#e8e8e8" stroke-width="0.2" textLength="33.0" lengthAdjust="spacingAndGlyphs">9 Jan 23:52</text><text x="950.7" y="434.0" font-size="7.2" fill="#e8e8e8" stroke="#e8e8e8" stroke-width="0.2" textLength="33.0" lengthAdjust="spacingAndGlyphs">9 Jan 23:56</text><text x="993.5" y="178.4" font-size="6.6" fill="#000" stroke="#000" stroke-width="0.25" textLength="23.0" lengthAdjust="spacingAndGlyphs">4509.06</text><text x="14.8" y="85.0" font-size="7" fill="#e0e0e0" stroke="#e0e0e0" stroke-width="0.2" textLength="132.2" lengthAdjust="spacingAndGlyphs">GOLD,M1  4509.21 4509.38 4508.91 4509.06</text><text x="7.0" y="94.8" font-size="7" fill="#e0e0e0" stroke="#e0e0e0" stroke-width="0.2" textLength="88.0" lengthAdjust="spacingAndGlyphs">プログラムは正常に動作しています。</text><text x="7.0" y="102.0" font-size="7" fill="#e0e0e0" stroke="#e0e0e0" stroke-width="0.2" textLength="88.6" lengthAdjust="spacingAndGlyphs">有効期限: 2030.12.31 23:59:59</text><text x="45.0" y="105.5" font-size="7" fill="#cfcfcf" textLength="24.0" lengthAdjust="spacingAndGlyphs">buy 0.23</text><text x="7.0" y="111.3" font-size="7" fill="#e0e0e0" stroke="#e0e0e0" stroke-width="0.2" textLength="88.6" lengthAdjust="spacingAndGlyphs">次回認証: 2026.01.10 01:00:19</text><text x="43.4" y="146.5" font-size="7" fill="#e0e0e0" stroke="#e0e0e0" stroke-width="0.2" textLength="23.4" lengthAdjust="spacingAndGlyphs">sell 0.35</text><text x="43.4" y="161.0" font-size="7" fill="#e0e0e0" stroke="#e0e0e0" stroke-width="0.2" textLength="25.6" lengthAdjust="spacingAndGlyphs">buy 0.35</text><text x="43.4" y="200.5" font-size="7" fill="#e0e0e0" stroke="#e0e0e0" stroke-width="0.2" textLength="23.4" lengthAdjust="spacingAndGlyphs">sell 0.23</text><text x="939.0" y="86.0" font-size="7" fill="#e0e0e0" stroke="#e0e0e0" stroke-width="0.2" textLength="37.0" lengthAdjust="spacingAndGlyphs">GoldenSurge</text><text x="17.0" y="455.5" font-size="8.5" fill="#222" stroke="#222" stroke-width="0.25" textLength="32.2" lengthAdjust="spacingAndGlyphs">注文番号</text><text x="228.5" y="455.5" font-size="8.5" fill="#222" stroke="#222" stroke-width="0.25" textLength="17.1" lengthAdjust="spacingAndGlyphs">時間</text><text x="281.3" y="455.5" font-size="8.5" fill="#222" stroke="#222" stroke-width="0.25" textLength="33.0" lengthAdjust="spacingAndGlyphs">取引種別</text><text x="352.2" y="455.5" font-size="8.5" fill="#222" stroke="#222" stroke-width="0.25" textLength="15.4" lengthAdjust="spacingAndGlyphs">数量</text><text x="406.9" y="455.5" font-size="8.5" fill="#222" stroke="#222" stroke-width="0.25" textLength="31.8" lengthAdjust="spacingAndGlyphs">通貨ペア</text><text x="497.5" y="455.5" font-size="8.5" fill="#222" stroke="#222" stroke-width="0.25" textLength="17.0" lengthAdjust="spacingAndGlyphs">価格</text><text x="531.6" y="455.5" font-size="8.5" fill="#222" stroke="#222" stroke-width="0.25" textLength="59.8" lengthAdjust="spacingAndGlyphs">決済逆指値(S/L)</text><text x="615.4" y="455.5" font-size="8.5" fill="#222" stroke="#222" stroke-width="0.25" textLength="52.9" lengthAdjust="spacingAndGlyphs">決済指値(T/P)</text><text x="727.0" y="455.5" font-size="8.5" fill="#222" stroke="#222" stroke-width="0.25" textLength="17.5" lengthAdjust="spacingAndGlyphs">価格</text><text x="795.9" y="455.5" font-size="8.5" fill="#222" stroke="#222" stroke-width="0.25" textLength="25.1" lengthAdjust="spacingAndGlyphs">手数料</text><text x="873.0" y="455.5" font-size="8.5" fill="#222" stroke="#222" stroke-width="0.25" textLength="24.7" lengthAdjust="spacingAndGlyphs">スワップ</text><text x="999.0" y="455.5" font-size="8.5" fill="#222" stroke="#222" stroke-width="0.25" textLength="17.0" lengthAdjust="spacingAndGlyphs">損益</text><text x="58.0" y="455.0" font-size="8" fill="#888" textLength="3.0" lengthAdjust="spacingAndGlyphs">/</text><text x="177.6" y="470.5" font-size="9" fill="#111" stroke="#111" stroke-width="0.25" textLength="69.7" lengthAdjust="spacingAndGlyphs">2026.01.09 23:44:20</text><text x="302.5" y="470.5" font-size="9" fill="#111" stroke="#111" stroke-width="0.25" textLength="13.5" lengthAdjust="spacingAndGlyphs">buy</text><text x="352.7" y="470.5" font-size="9" fill="#111" stroke="#111" stroke-width="0.25" textLength="14.9" lengthAdjust="spacingAndGlyphs">0.23</text><text x="423.4" y="470.5" font-size="9" fill="#111" stroke="#111" stroke-width="0.25" textLength="15.3" lengthAdjust="spacingAndGlyphs">gold</text><text x="488.3" y="470.5" font-size="9" fill="#111" stroke="#111" stroke-width="0.25" textLength="28.0" lengthAdjust="spacingAndGlyphs">4510.99</text><text x="577.5" y="470.5" font-size="9" fill="#111" stroke="#111" stroke-width="0.25" textLength="15.0" lengthAdjust="spacingAndGlyphs">0.00</text><text x="654.4" y="470.5" font-size="9" fill="#111" stroke="#111" stroke-width="0.25" textLength="15.0" lengthAdjust="spacingAndGlyphs">0.00</text><text x="718.0" y="470.5" font-size="9" fill="#111" stroke="#111" stroke-width="0.25" textLength="28.0" lengthAdjust="spacingAndGlyphs">4509.06</text><text x="818.4" y="470.5" font-size="9" fill="#111" stroke="#111" stroke-width="0.25" textLength="4.4" lengthAdjust="spacingAndGlyphs">0</text><text x="877.2" y="470.5" font-size="9" fill="#111" stroke="#111" stroke-width="0.25" textLength="22.8" lengthAdjust="spacingAndGlyphs">-4 724</text><text x="981.4" y="470.5" font-size="9" fill="#111" stroke="#111" stroke-width="0.25" textLength="22.8" lengthAdjust="spacingAndGlyphs">-7 010</text><text x="177.6" y="484.5" font-size="9" fill="#111" stroke="#111" stroke-width="0.25" textLength="69.7" lengthAdjust="spacingAndGlyphs">2026.01.09 23:47:08</text><text x="302.5" y="484.5" font-size="9" fill="#111" stroke="#111" stroke-width="0.25" textLength="13.5" lengthAdjust="spacingAndGlyphs">buy</text><text x="352.7" y="484.5" font-size="9" fill="#111" stroke="#111" stroke-width="0.25" textLength="14.9" lengthAdjust="spacingAndGlyphs">0.35</text><text x="423.4" y="484.5" font-size="9" fill="#111" stroke="#111" stroke-width="0.25" textLength="15.3" lengthAdjust="spacingAndGlyphs">gold</text><text x="488.3" y="484.5" font-size="9" fill="#111" stroke="#111" stroke-width="0.25" textLength="28.0" lengthAdjust="spacingAndGlyphs">4509.42</text><text x="577.5" y="484.5" font-size="9" fill="#111" stroke="#111" stroke-width="0.25" textLength="15.0" lengthAdjust="spacingAndGlyphs">0.00</text><text x="654.4" y="484.5" font-size="9" fill="#111" stroke="#111" stroke-width="0.25" textLength="15.0" lengthAdjust="spacingAndGlyphs">0.00</text><text x="718.0" y="484.5" font-size="9" fill="#111" stroke="#111" stroke-width="0.25" textLength="28.0" lengthAdjust="spacingAndGlyphs">4509.06</text><text x="818.4" y="484.5" font-size="9" fill="#111" stroke="#111" stroke-width="0.25" textLength="4.4" lengthAdjust="spacingAndGlyphs">0</text><text x="877.2" y="484.5" font-size="9" fill="#111" stroke="#111" stroke-width="0.25" textLength="22.8" lengthAdjust="spacingAndGlyphs">-7 189</text><text x="981.4" y="484.5" font-size="9" fill="#111" stroke="#111" stroke-width="0.25" textLength="22.8" lengthAdjust="spacingAndGlyphs">-1 990</text><text x="177.6" y="498.5" font-size="9" fill="#111" stroke="#111" stroke-width="0.25" textLength="69.7" lengthAdjust="spacingAndGlyphs">2026.01.09 23:47:23</text><text x="303.4" y="498.5" font-size="9" fill="#111" stroke="#111" stroke-width="0.25" textLength="12.6" lengthAdjust="spacingAndGlyphs">sell</text><text x="352.7" y="498.5" font-size="9" fill="#111" stroke="#111" stroke-width="0.25" textLength="14.9" lengthAdjust="spacingAndGlyphs">0.23</text><text x="423.4" y="498.5" font-size="9" fill="#111" stroke="#111" stroke-width="0.25" textLength="15.3" lengthAdjust="spacingAndGlyphs">gold</text><text x="488.3" y="498.5" font-size="9" fill="#111" stroke="#111" stroke-width="0.25" textLength="28.0" lengthAdjust="spacingAndGlyphs">4508.33</text><text x="577.5" y="498.5" font-size="9" fill="#111" stroke="#111" stroke-width="0.25" textLength="15.0" lengthAdjust="spacingAndGlyphs">0.00</text><text x="654.4" y="498.5" font-size="9" fill="#111" stroke="#111" stroke-width="0.25" textLength="15.0" lengthAdjust="spacingAndGlyphs">0.00</text><text x="718.0" y="498.5" font-size="9" fill="#111" stroke="#111" stroke-width="0.25" textLength="28.0" lengthAdjust="spacingAndGlyphs">4509.53</text><text x="818.4" y="498.5" font-size="9" fill="#111" stroke="#111" stroke-width="0.25" textLength="4.4" lengthAdjust="spacingAndGlyphs">0</text><text x="887.0" y="498.5" font-size="9" fill="#111" stroke="#111" stroke-width="0.25" textLength="13.0" lengthAdjust="spacingAndGlyphs">787</text><text x="981.4" y="498.5" font-size="9" fill="#111" stroke="#111" stroke-width="0.25" textLength="22.8" lengthAdjust="spacingAndGlyphs">-4 359</text><text x="177.6" y="512.5" font-size="9" fill="#111" stroke="#111" stroke-width="0.25" textLength="69.7" lengthAdjust="spacingAndGlyphs">2026.01.09 23:49:00</text><text x="303.4" y="512.5" font-size="9" fill="#111" stroke="#111" stroke-width="0.25" textLength="12.6" lengthAdjust="spacingAndGlyphs">sell</text><text x="352.7" y="512.5" font-size="9" fill="#111" stroke="#111" stroke-width="0.25" textLength="14.9" lengthAdjust="spacingAndGlyphs">0.35</text><text x="423.4" y="512.5" font-size="9" fill="#111" stroke="#111" stroke-width="0.25" textLength="15.3" lengthAdjust="spacingAndGlyphs">gold</text><text x="488.3" y="512.5" font-size="9" fill="#111" stroke="#111" stroke-width="0.25" textLength="28.0" lengthAdjust="spacingAndGlyphs">4509.83</text><text x="577.5" y="512.5" font-size="9" fill="#111" stroke="#111" stroke-width="0.25" textLength="15.0" lengthAdjust="spacingAndGlyphs">0.00</text><text x="654.4" y="512.5" font-size="9" fill="#111" stroke="#111" stroke-width="0.25" textLength="15.0" lengthAdjust="spacingAndGlyphs">0.00</text><text x="718.0" y="512.5" font-size="9" fill="#111" stroke="#111" stroke-width="0.25" textLength="28.0" lengthAdjust="spacingAndGlyphs">4509.53</text><text x="818.4" y="512.5" font-size="9" fill="#111" stroke="#111" stroke-width="0.25" textLength="4.4" lengthAdjust="spacingAndGlyphs">0</text><text x="880.2" y="512.5" font-size="9" fill="#111" stroke="#111" stroke-width="0.25" textLength="19.8" lengthAdjust="spacingAndGlyphs">1 198</text><text x="984.4" y="512.5" font-size="9" fill="#111" stroke="#111" stroke-width="0.25" textLength="19.8" lengthAdjust="spacingAndGlyphs">1 658</text><text x="28.0" y="526.5" font-size="9" fill="#222" font-weight="600" stroke="#222" stroke-width="0.25" textLength="247.0" lengthAdjust="spacingAndGlyphs">残高: 7 025 345 JPY  有効証拠金: 7 003 716  余剰証拠金: 7 003 716</text><text x="975.6" y="526.5" font-size="8.6" fill="#222" font-weight="bold" stroke="#222" stroke-width="0.25" textLength="27.5" lengthAdjust="spacingAndGlyphs">-21 629</text><text x="21.0" y="603.0" font-size="9" fill="#111" stroke="#111" stroke-width="0.25" textLength="14.9" lengthAdjust="spacingAndGlyphs">取引</text><text x="51.5" y="603.0" font-size="9" fill="#6a6a6a" textLength="33.2" lengthAdjust="spacingAndGlyphs">運用比率</text><text x="99.7" y="603.0" font-size="9" fill="#6a6a6a" textLength="33.2" lengthAdjust="spacingAndGlyphs">口座履歴</text><text x="147.2" y="603.0" font-size="9" fill="#6a6a6a" textLength="24.8" lengthAdjust="spacingAndGlyphs">ニュース</text><text x="185.0" y="603.0" font-size="9" fill="#6a6a6a" textLength="41.0" lengthAdjust="spacingAndGlyphs">アラーム設定</text><text x="240.0" y="603.0" font-size="9" fill="#6a6a6a" textLength="44.0" lengthAdjust="spacingAndGlyphs">メールボックス</text><text x="302.3" y="603.0" font-size="9" fill="#6a6a6a" textLength="30.7" lengthAdjust="spacingAndGlyphs">マーケット</text><text x="357.3" y="603.0" font-size="9" fill="#6a6a6a" textLength="17.1" lengthAdjust="spacingAndGlyphs">記事</text><text x="393.2" y="603.0" font-size="9" fill="#6a6a6a" textLength="29.8" lengthAdjust="spacingAndGlyphs">ライブラリ</text><text x="436.0" y="603.0" font-size="9" fill="#6a6a6a" textLength="38.2" lengthAdjust="spacingAndGlyphs">エキスパート</text><text x="488.0" y="603.0" font-size="9" fill="#6a6a6a" textLength="33.4" lengthAdjust="spacingAndGlyphs">操作履歴</text><text x="285.0" y="605.0" font-size="6.5" fill="#e02020" font-weight="bold" textLength="3.5" lengthAdjust="spacingAndGlyphs">7</text><text x="333.4" y="605.0" font-size="6.5" fill="#e02020" font-weight="bold" textLength="10.3" lengthAdjust="spacingAndGlyphs">105</text><text x="375.5" y="605.0" font-size="6.5" fill="#e02020" font-weight="bold" textLength="3.0" lengthAdjust="spacingAndGlyphs">1</text><text x="3.0" y="622.0" font-size="8.8" fill="#111" stroke="#111" stroke-width="0.25" textLength="96.7" lengthAdjust="spacingAndGlyphs">F1キーでヘルプが表示されます</text><text x="526.5" y="622.0" font-size="8.8" fill="#111" stroke="#111" stroke-width="0.25" textLength="27.4" lengthAdjust="spacingAndGlyphs">Default</text><text x="943.0" y="622.0" font-size="8.8" fill="#111" stroke="#111" stroke-width="0.25" textLength="63.5" lengthAdjust="spacingAndGlyphs">-2079328/6306 kb</text><text x="60.0" y="14.0" font-size="8.4" fill="#111" stroke="#111" stroke-width="0.25" textLength="243.0" lengthAdjust="spacingAndGlyphs">: XMTradingMU-Demo 6 - デモ口座 - FinTrade Limited - [GOLD,M1]</text><text x="20.6" y="31.5" font-size="9" fill="#1a1a1a" stroke="#1a1a1a" stroke-width="0.25" textLength="35.2" lengthAdjust="spacingAndGlyphs">ファイル (F)</text><text x="69.0" y="31.5" font-size="9" fill="#1a1a1a" stroke="#1a1a1a" stroke-width="0.25" textLength="29.2" lengthAdjust="spacingAndGlyphs">表示 (V)</text><text x="112.0" y="31.5" font-size="9" fill="#1a1a1a" stroke="#1a1a1a" stroke-width="0.25" textLength="23.5" lengthAdjust="spacingAndGlyphs">挿入 (I)</text><text x="148.5" y="31.5" font-size="9" fill="#1a1a1a" stroke="#1a1a1a" stroke-width="0.25" textLength="35.5" lengthAdjust="spacingAndGlyphs">チャート (C)</text><text x="197.0" y="31.5" font-size="9" fill="#1a1a1a" stroke="#1a1a1a" stroke-width="0.25" textLength="31.0" lengthAdjust="spacingAndGlyphs">ツール (T)</text><text x="240.5" y="31.5" font-size="9" fill="#1a1a1a" stroke="#1a1a1a" stroke-width="0.25" textLength="45.2" lengthAdjust="spacingAndGlyphs">ウィンドウ (W)</text><text x="298.0" y="31.5" font-size="9" fill="#1a1a1a" stroke="#1a1a1a" stroke-width="0.25" textLength="35.0" lengthAdjust="spacingAndGlyphs">ヘルプ (H)</text><text x="182.3" y="50.0" font-size="9.5" fill="#111" stroke="#111" stroke-width="0.25" textLength="33.4" lengthAdjust="spacingAndGlyphs">新規注文</text><text x="298.0" y="50.0" font-size="9.5" fill="#111" stroke="#111" stroke-width="0.25" textLength="33.0" lengthAdjust="spacingAndGlyphs">自動売買</text><text x="223.6" y="68.3" font-size="7.2" fill="#444" textLength="9.7" lengthAdjust="spacingAndGlyphs">M1</text><text x="243.8" y="68.3" font-size="7.2" fill="#444" textLength="9.2" lengthAdjust="spacingAndGlyphs">M5</text><text x="262.3" y="68.3" font-size="7.2" fill="#444" textLength="12.7" lengthAdjust="spacingAndGlyphs">M15</text><text x="282.0" y="68.3" font-size="7.2" fill="#444" textLength="12.8" lengthAdjust="spacingAndGlyphs">M30</text><text x="304.0" y="68.3" font-size="7.2" fill="#444" textLength="8.0" lengthAdjust="spacingAndGlyphs">H1</text><text x="323.0" y="68.3" font-size="7.2" fill="#444" textLength="8.7" lengthAdjust="spacingAndGlyphs">H4</text><text x="343.2" y="68.3" font-size="7.2" fill="#444" textLength="8.4" lengthAdjust="spacingAndGlyphs">D1</text><text x="362.2" y="68.3" font-size="7.2" fill="#444" textLength="10.5" lengthAdjust="spacingAndGlyphs">W1</text><text x="381.0" y="68.3" font-size="7.2" fill="#444" textLength="11.5" lengthAdjust="spacingAndGlyphs">MN</text><text x="153.5" y="69.0" font-size="9.5" fill="#555" font-weight="bold" textLength="6.5" lengthAdjust="spacingAndGlyphs">A</text><text x="7.5" y="12.5" font-size="5" fill="#ddd" font-weight="bold" textLength="9.0" lengthAdjust="spacingAndGlyphs">XM</text></svg>
<!-- window border -->
<div class="a" style="left:0;top:0;width:1024px;height:1px;background:#3d4753"></div>
<div class="a" style="left:0;top:0;width:1px;height:627px;background:#4b5562"></div>
<div class="a" style="left:1023px;top:0;width:1px;height:627px;background:#4b5562"></div>
<div class="a" style="left:0;top:626px;width:1024px;height:1px;background:#4b5562"></div>
</body></html>
